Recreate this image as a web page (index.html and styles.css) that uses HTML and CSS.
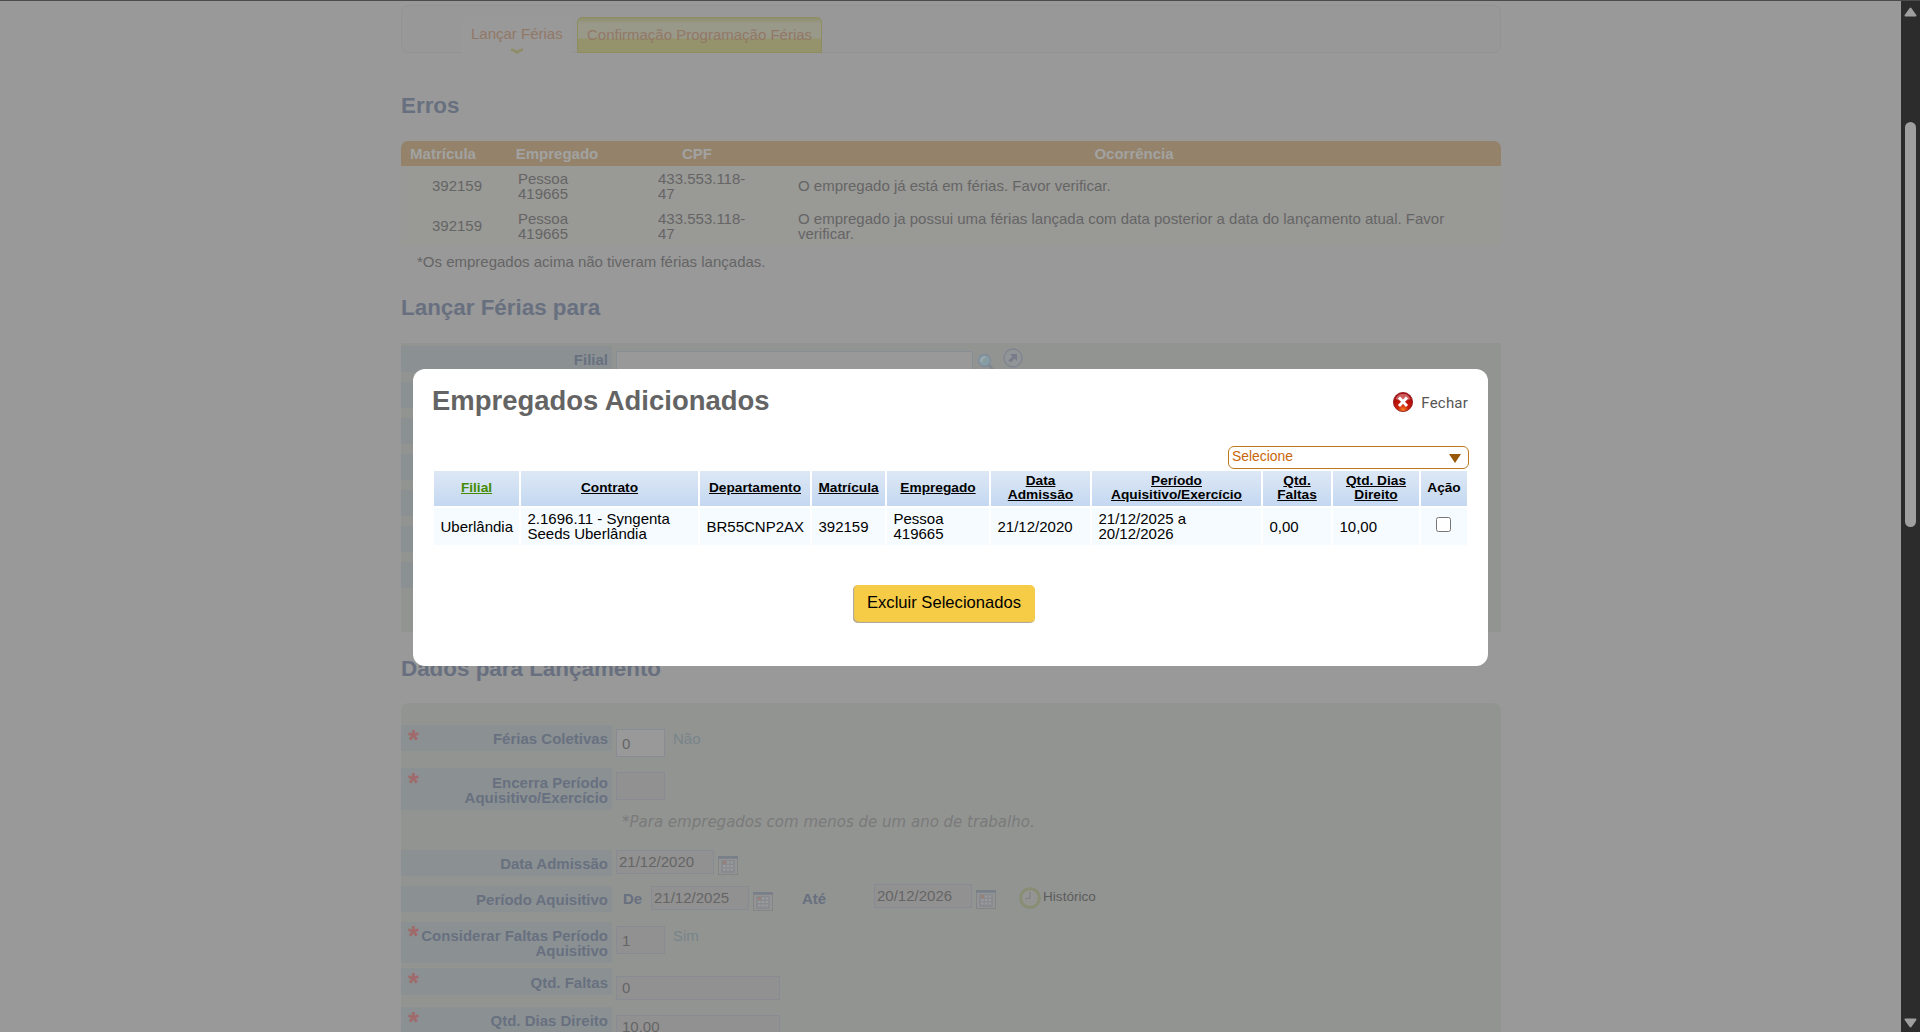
FILE: index.html
```html
<!DOCTYPE html>
<html lang="pt-BR">
<head>
<meta charset="utf-8">
<title>Lançar Férias</title>
<link rel="stylesheet" href="styles.css">
</head>
<body>
<svg class="defs" width="0" height="0">
  <symbol id="calendar" viewBox="0 0 20 19">
    <rect x=".5" y=".5" width="19" height="18" fill="#949495" stroke="#838486"/>
    <path d="M0 1.500h20" stroke="#787e8a" stroke-width="2.400"/>
    <path d="M3 4h14v13H3z" fill="#878b90"/>
    <path d="M5 6.500h11M5 10h11M5 13.500h11" stroke="#9b9b9b" stroke-width="2.200" stroke-dasharray="2.600 1.200"/>
    <path d="M5 5h3v3H5z" fill="#997f75"/>
  </symbol>
</svg>
<div class="window">
  <main class="page">
    <nav class="tabs">
      <a class="tab active">Lançar Férias
        <svg class="caret" width="14" height="7" viewBox="0 0 14 7"><path d="M1 1.500Q4 2 7 4.500Q10 2 13 1.500" fill="none" stroke="#8f8d68" stroke-width="2.600"/></svg>
      </a>
      <a class="tab other">Confirmação Programação Férias</a>
    </nav>

    <h2 class="h-errors">Erros</h2>
    <div class="errors">
      <div class="err-row err-head"><b>Matrícula</b><b>Empregado</b><b>CPF</b><b>Ocorrência</b></div>
      <div class="err-row"><span>392159</span><span>Pessoa 419665</span><span>433.553.118-<br>47</span><span>O empregado já está em férias. Favor verificar.</span></div>
      <div class="err-row"><span>392159</span><span>Pessoa 419665</span><span>433.553.118-<br>47</span><span>O empregado ja possui uma férias lançada com data posterior a data do lançamento atual. Favor verificar.</span></div>
    </div>
    <p class="err-note">*Os empregados acima não tiveram férias lançadas.</p>

    <h2 class="h-target">Lançar Férias para</h2>
    <section class="panel target">
      <div class="row">
        <div class="label">Filial</div>
        <div class="input white wide"></div>
        <svg class="magnifier" width="20" height="20" viewBox="0 0 20 20"><circle cx="7.500" cy="7.500" r="6" fill="#869da3" stroke="#7f8a9c" stroke-width="1.300"/><path d="M4.500 9a4 4 0 0 1 4-5" stroke="#9da9ac" stroke-width="2.200" fill="none"/><path d="m12 12 6 7" stroke="#7f8690" stroke-width="2.600"/></svg>
        <svg class="go" width="20" height="20" viewBox="0 0 20 20"><circle cx="10" cy="10" r="9" fill="#929598" stroke="#80858f" stroke-width="1.400"/><path d="M6.500 13.500 11 9" stroke="#777c88" stroke-width="3"/><path d="M7 6h7v7z" fill="#777c88"/></svg>
      </div>
      <div class="label"></div>
      <div class="label"></div>
      <div class="label"></div>
      <div class="label"></div>
      <div class="label"></div>
      <div class="label"></div>
    </section>

    <h2 class="h-data">Dados para Lançamento</h2>
    <section class="panel data">
      <div class="row r1"><div class="label"><i>*</i>Férias Coletivas</div><div class="input white small">0</div><span class="hint">Não</span></div>
      <div class="row r2"><div class="label two"><i>*</i>Encerra Período Aquisitivo/Exercício</div><div class="input small"></div></div>
      <p class="note">*Para empregados com menos de um ano de trabalho.</p>
      <div class="row r3"><div class="label">Data Admissão</div><div class="input date">21/12/2020</div><svg class="cal" width="20" height="19"><use href="#calendar"/></svg></div>
      <div class="row r4"><div class="label">Período Aquisitivo</div><b class="de">De</b><div class="input date from">21/12/2025</div><svg class="cal" width="20" height="19"><use href="#calendar"/></svg><b class="ate">Até</b><div class="input date until">20/12/2026</div><svg class="cal cal-until" width="20" height="19"><use href="#calendar"/></svg>
        <svg class="clock" width="22" height="22" viewBox="0 0 22 22"><circle cx="11" cy="11" r="9.300" fill="#959694" stroke="#888d74" stroke-width="3"/><path d="M11 5v6.500H6" fill="none" stroke="#838487" stroke-width="1.500"/><path d="M11 15v2M15 11h2M14 14l1 1M14 8l1-1M7 15l1-1M7 7l1 1" stroke="#8a8b8d"/></svg><span class="history">Histórico</span></div>
      <div class="row r5"><div class="label two"><i>*</i>Considerar Faltas Período Aquisitivo</div><div class="input small">1</div><span class="hint">Sim</span></div>
      <div class="row r6"><div class="label"><i>*</i>Qtd. Faltas</div><div class="input medium">0</div></div>
      <div class="row r7"><div class="label"><i>*</i>Qtd. Dias Direito</div><div class="input medium">10,00</div></div>
    </section>
  </main>

  <aside class="scrollbar">
    <svg width="13" height="10" viewBox="0 0 13 10"><path d="M6.500 1.500 11.500 8.500h-10z" fill="#9f9f9f" stroke="#9f9f9f" stroke-width="2" stroke-linejoin="round"/></svg>
    <div class="thumb"></div>
    <svg class="down" width="13" height="10" viewBox="0 0 13 10"><path d="M6.500 8.500 11.500 1.500h-10z" fill="#9f9f9f" stroke="#9f9f9f" stroke-width="2" stroke-linejoin="round"/></svg>
  </aside>

  <div class="modal">
    <header class="modal-head">
      <h1>Empregados Adicionados</h1>
      <a class="close">
        <svg width="20" height="20" viewBox="0 0 20 20">
          <defs><radialGradient id="red" cx=".5" cy=".9" r=".8"><stop offset="0" stop-color="#f58220"/><stop offset=".35" stop-color="#cc1f0c"/><stop offset="1" stop-color="#a3070c"/></radialGradient></defs>
          <circle cx="10" cy="10" r="9.600" fill="url(#red)" stroke="#8a1016" stroke-width=".8"/>
          <path d="M2.500 7a8 8 0 0 1 15 0q-7.500 4-15 0z" fill="#e08a8a" opacity=".65"/>
          <path d="m6 5.500 8 8.500M14 5.500 6 14" stroke="#fff" stroke-width="3"/>
        </svg>
        <span>Fechar</span>
      </a>
    </header>
    <div class="select"><span>Selecione</span><svg width="12" height="9" viewBox="0 0 12 9"><path d="M0 0h12L6 9z" fill="#975809"/></svg></div>
    <div class="grid">
      <div class="th sorted"><u>Filial</u></div><div class="th"><u>Contrato</u></div><div class="th"><u>Departamento</u></div><div class="th"><u>Matrícula</u></div><div class="th"><u>Empregado</u></div><div class="th"><u>Data<br>Admissão</u></div><div class="th"><u>Período<br>Aquisitivo/Exercício</u></div><div class="th"><u>Qtd.<br>Faltas</u></div><div class="th"><u>Qtd. Dias<br>Direito</u></div><div class="th">Ação</div>
      <div class="td">Uberlândia</div><div class="td two-lines">2.1696.11 - Syngenta<br>Seeds Uberlândia</div><div class="td">BR55CNP2AX</div><div class="td">392159</div><div class="td two-lines">Pessoa<br>419665</div><div class="td">21/12/2020</div><div class="td two-lines">21/12/2025 a<br>20/12/2026</div><div class="td">0,00</div><div class="td">10,00</div><div class="td check"><input type="checkbox"></div>
    </div>
    <button class="delete">Excluir Selecionados</button>
  </div>
</div>
</body>
</html>
```
FILE: styles.css
```css
* { box-sizing: border-box; margin: 0; padding: 0; }
body { font: 15px/15px "Liberation Sans", Arial, sans-serif; color: #656565; background: #999; }
.defs { position: absolute; }
.window { position: relative; display: flex; justify-content: space-between; height: 1032px; overflow: hidden; border-top: 1px solid #4d4b4d; }
.page { width: 1100px; margin-left: 401px; height: 1031px; overflow: hidden; }
svg { display: block; flex: none; }

.tabs { display: flex; align-items: flex-end; height: 48px; margin-top: 4px; padding-left: 60px; border: 1px solid #939393; border-radius: 7px; background: #989898; }
.tab { color: #927866; white-space: nowrap; }
.active { width: 110px; height: 36px; padding: 9px 0 0 9px; margin-bottom: -1px; background: #999; border-radius: 6px 6px 0 0; }
.caret { margin: 7px 0 0 39px; }
.other { width: 245px; height: 36px; margin: 0 0 -1px 5px; padding: 9px 0 0 9px; border: 1px solid #8e8d5f; border-radius: 5px 5px 0 0; background: linear-gradient(#90906d 0, #99998a 6px, #999989 20px, #94936b 21px); }

h2 { font-size: 22.4px; line-height: 24px; color: #687080; }
.h-errors { margin-top: 41px; }
.errors { margin-top: 23px; background: #999996; }
.err-row { display: grid; grid-template-columns: 86px 140px 140px 1fr; align-items: center; height: 40px; }
.err-row span { padding: 0 31px 1px; }
.err-row span:first-child { padding-right: 0; }
.err-head { height: 25px; background: #94836a; border-radius: 7px 7px 0 0; color: #a2a2a2; text-align: center; }
.err-head b:first-child { margin-left: -2px; }
.err-note { margin: 8px 0 0 16px; }
.h-target { margin-top: 27px; }

.panel { background: #929492; }
.target { display: flex; flex-direction: column; gap: 10px; height: 289px; margin-top: 23px; padding-top: 3px; }
.row { display: flex; align-items: flex-start; }
.target .row { height: 26px; }
.label { position: relative; flex: none; width: 211px; height: 26px; padding: 6px 4px 0 0; background: #8b9093; color: #687080; font-weight: bold; text-align: right; }
.label.two { height: 42px; padding-left: 10px; padding-top: 7px; }
.label i { position: absolute; left: 7px; top: 1px; font: bold 28px/27px "Liberation Sans", Arial, sans-serif; color: #a06a6a; }
.input { flex: none; height: 28px; margin: 4px 0 0 4px; padding: 6px 5px 0; border: 1px solid #888b94; background: #929191; }
.white { background: #999; }
.wide { width: 357px; margin-top: 5px; border-color: #888e95; }
.magnifier { margin: 7px 0 0 4px; }
.go { margin: 2px 0 0 6px; }
.small { width: 49px; }
.medium { width: 164px; height: 24px; padding-top: 3px; }
.date { width: 98px; height: 24px; margin-top: 0; padding: 3px 0 0 2px; }
.hint { margin: 6px 0 0 8px; color: #788488; }
.h-data { margin-top: 25px; }
.data { height: 400px; margin-top: 22px; padding-top: 22px; border-radius: 8px 8px 0 0; }
.r1 { height: 43px; }
.r2 { height: 46px; }
.note { height: 36px; padding-left: 221px; font: italic 15px/17px "DejaVu Sans", sans-serif; color: #7a7a7a; white-space: nowrap; }
.r3, .r4 { height: 36px; }
.cal { margin: 6px 0 0 4px; }
.de { width: 28px; margin: 5px 0 0 11px; color: #687080; }
.from { margin-left: 0; }
.ate { width: 72px; margin: 5px 0 0 29px; color: #687080; }
.until { margin: -2px 0 0 0; }
.cal-until { margin-top: 4px; }
.clock { margin: 1px 0 0 23px; }
.history { margin: 3px 0 0 2px; font-size: 13.600px; color: #5c5c5c; }
.r5 { height: 46px; }
.r5 .label.two { height: 41px; padding-top: 6px; }
.r5 .label i { top: 0; }
.r6 { height: 39px; }
.r6 .label { height: 27px; padding-top: 7px; }
.r6 .input, .r7 .input { margin-top: 8px; }

.scrollbar { width: 19px; height: 1031px; padding: 6px 3px 0; background: #2c2c2c; }
.thumb { width: 11px; height: 405px; margin: 105px 0 0 1px; border-radius: 6px; background: #9f9f9f; }
.down { margin-top: 482px; }
.scrollbar .down { margin-top: 491px; }

.modal { position: absolute; left: 413px; top: 368px; width: 1075px; height: 297px; padding: 15px 19px 0 21px; border-radius: 12px; background: #fff; color: #000; }
.modal-head { display: flex; justify-content: space-between; height: 62px; padding-right: 1px; }
h1 { margin: 1px 0 0 -2px; font-size: 27.450px; line-height: 32px; color: #646464; }
.close { display: flex; gap: 8px; height: 20px; margin-top: 8px; font: 15px/22px Roboto, sans-serif; letter-spacing: .2px; color: #555; }
.select { display: flex; justify-content: space-between; width: 241px; height: 23px; margin: 0 0 2px auto; padding: 2px 7px 0 3px; border: 1px solid #bd7a1c; border-radius: 6px; font-size: 13.900px; color: #c9670b; }
.select svg { margin-top: 5px; }
.grid { display: grid; grid-template-columns: 85px 177px 110px 73px 102px 99px 169px 68px 86px 46px; grid-template-rows: 35px 37px; gap: 2px; }
.th { display: flex; align-items: center; justify-content: center; padding-bottom: 1px; background: linear-gradient(#dde8f5, #c4d8f1); font-weight: bold; font-size: 13.700px; line-height: 14px; text-align: center; white-space: nowrap; }
.sorted { color: #458b00; }
.td { display: flex; align-items: center; padding-left: 6.500px; background: #f5fbff; white-space: nowrap; }
.two-lines { padding-bottom: 2px; }
.check { justify-content: center; padding: 0 2px 4px 0; }
.check input { width: 15px; height: 15px; }
.delete { display: block; width: 182px; height: 38px; margin: 40px 0 0 419px; padding-bottom: 2px; border: 0; border-radius: 5px; background: #f6cb45; box-shadow: inset 1px -1px 1px #a8a8a8; font: 16.600px "Liberation Sans", Arial, sans-serif; color: #000; }
```
